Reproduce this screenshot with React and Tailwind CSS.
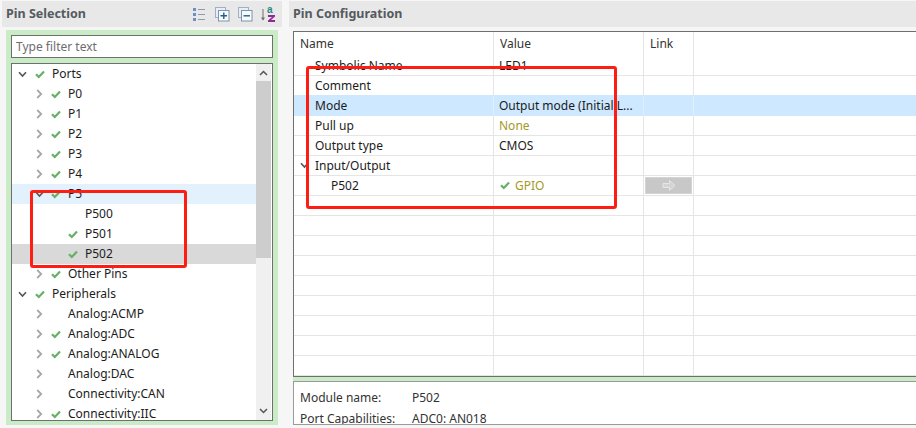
import React from 'react';

const tree = [
  { label: 'Ports', level: 0, open: true, check: true },
  { label: 'P0', level: 1, check: true },
  { label: 'P1', level: 1, check: true },
  { label: 'P2', level: 1, check: true },
  { label: 'P3', level: 1, check: true },
  { label: 'P4', level: 1, check: true },
  { label: 'P5', level: 1, open: true, check: true, hover: true },
  { label: 'P500', level: 2, leaf: true },
  { label: 'P501', level: 2, leaf: true, check: true },
  { label: 'P502', level: 2, leaf: true, check: true, selected: true },
  { label: 'Other Pins', level: 1, check: true },
  { label: 'Peripherals', level: 0, open: true, check: true },
  { label: 'Analog:ACMP', level: 1 },
  { label: 'Analog:ADC', level: 1, check: true },
  { label: 'Analog:ANALOG', level: 1, check: true },
  { label: 'Analog:DAC', level: 1 },
  { label: 'Connectivity:CAN', level: 1 },
  { label: 'Connectivity:IIC', level: 1, check: true },
];

const rows = [
  { name: 'Symbolic Name', value: 'LED1' },
  { name: 'Comment', value: '', beforeSelected: true },
  { name: 'Mode', value: 'Output mode (Initial L...', selected: true },
  { name: 'Pull up', value: 'None', valueClass: 'text-[#a39a1f]' },
  { name: 'Output type', value: 'CMOS' },
  { name: 'Input/Output', value: '', open: true },
  { name: 'P502', value: 'GPIO', child: true, check: true, valueClass: 'text-[#a39a1f]', link: true },
  ...Array.from({ length: 9 }, () => ({ name: '', value: '' })),
];

function Check({ className = '' }) {
  return (
    <svg width="10" height="9" viewBox="0 0 10 9" className={className}>
      <path d="M1 4.2 L3.8 7 L9 1.5" fill="none" stroke="#64b064" strokeWidth="2.2" />
    </svg>
  );
}

function Chevron({ open }) {
  if (open) {
    return (
      <svg width="9" height="7" viewBox="0 0 9 7">
        <path d="M1 1.2 L4.5 5 L8 1.2" fill="none" stroke="#555555" strokeWidth="1.6" />
      </svg>
    );
  }
  return (
    <svg width="7" height="10" viewBox="0 0 7 10" className="ml-[2px]">
      <path d="M1.2 1 L5.2 5 L1.2 9" fill="none" stroke="#a8a8a8" strokeWidth="1.8" />
    </svg>
  );
}

function TreeRow({ item }) {
  const bg = item.selected ? 'bg-[#d9d9d9]' : item.hover ? 'bg-[#e3f1fc]' : '';
  const indent = item.level === 0 ? 'pl-[6px]' : item.level === 1 ? 'pl-[22px]' : 'pl-[39px]';
  return (
    <div className={`h-5 shrink-0 flex items-center ${indent} ${bg}`}>
      <span className={`w-[10px] flex ${item.open && item.level === 1 ? 'justify-end' : ''}`}>
        {!item.leaf && <Chevron open={item.open} />}
      </span>
      <span className="w-[10px] ml-[7px] flex">{item.check && <Check />}</span>
      <span className="ml-[7px] text-[12px] text-[#1c1c1c] whitespace-nowrap">{item.label}</span>
    </div>
  );
}

function ToolbarIcons() {
  return (
    <div className="flex items-center gap-[7px]">
      <svg width="16" height="16" viewBox="0 0 16 16">
        <rect x="2" y="2" width="3" height="3" fill="#6f8fc4" />
        <rect x="2" y="7" width="3" height="3" fill="#6f8fc4" />
        <rect x="2" y="12" width="3" height="3" fill="#6f8fc4" />
        <path d="M7 3.5h7M7 8.5h7M7 13.5h7" stroke="#8d9bb0" strokeWidth="1" />
      </svg>
      <svg width="16" height="16" viewBox="0 0 16 16">
        <rect x="1.5" y="1.5" width="10" height="10" fill="#e8eef5" stroke="#9fb0c4" />
        <rect x="4.5" y="4.5" width="10.5" height="10.5" fill="#f8fbfd" stroke="#8093ab" />
        <path d="M6.5 9.8h6.5M9.8 6.5v6.5" stroke="#1f5f8f" strokeWidth="1.4" />
      </svg>
      <svg width="16" height="16" viewBox="0 0 16 16">
        <rect x="1.5" y="1.5" width="10" height="10" fill="#e8eef5" stroke="#9fb0c4" />
        <rect x="4.5" y="4.5" width="10.5" height="10.5" fill="#f8fbfd" stroke="#8093ab" />
        <path d="M6.5 9.8h6.5" stroke="#1f5f8f" strokeWidth="1.4" />
      </svg>
      <svg width="17" height="18" viewBox="0 0 17 18">
        <path d="M3 4v11" stroke="#707070" strokeWidth="1" />
        <path d="M1 12.5h4L3 15.5z" fill="#707070" />
        <text x="7" y="8" fontSize="10" fontWeight="700" fill="#2a8a7a" fontFamily="'Liberation Sans', sans-serif">a</text>
        <path d="M8 10h7v1.6l-4 3.4h4v2h-7v-1.6l4-3.4h-4z" fill="#8e2a96" />
      </svg>
    </div>
  );
}

function PinSelection() {
  return (
    <div className="w-[280px] ml-[2px] shrink-0 flex flex-col">
      <div className="h-[26px] mt-px bg-[#e8e8e8] flex items-center justify-between pl-[4px] pr-[5px]">
        <span className="text-[12.5px] font-bold text-[#555a60]">Pin Selection</span>
        <ToolbarIcons />
      </div>
      <div className="mt-[3px] mx-[4px] h-[395px] bg-[#c9ebc5] px-[5px] pt-[5px] pb-[4px] flex flex-col gap-[5px]">
        <div className="h-[23px] shrink-0 border border-[#6f6f6f] bg-white flex items-center px-[4px] text-[12px] text-[#6d6d6d]">
          Type filter text
        </div>
        <div className="flex-1 min-h-0 border border-[#6f6f6f] bg-white flex overflow-hidden">
          <div className="flex-1 min-w-0 flex flex-col overflow-hidden">
            {tree.map((item) => (
              <TreeRow key={item.label} item={item} />
            ))}
          </div>
          <div className="w-[15px] mr-px shrink-0 bg-[#f0f0f0] flex flex-col">
            <div className="h-[17px] flex items-center justify-center">
              <svg width="9" height="6" viewBox="0 0 9 6">
                <path d="M1 5 L4.5 1.5 L8 5" fill="none" stroke="#555555" strokeWidth="1.5" />
              </svg>
            </div>
            <div className="h-[177px] bg-[#cdcdcd]" />
            <div className="flex-1 flex items-end justify-center pb-[6px]">
              <svg width="9" height="6" viewBox="0 0 9 6">
                <path d="M1 1 L4.5 4.5 L8 1" fill="none" stroke="#555555" strokeWidth="1.5" />
              </svg>
            </div>
          </div>
        </div>
      </div>
    </div>
  );
}

function ConfigRow({ row }) {
  const bg = row.selected ? 'bg-[#cde8ff]' : '';
  const bottom = row.selected ? 'border-b-[#cde8ff]' : row.beforeSelected ? 'border-b-[#cde8ff]' : 'border-b-[#e5e5e5]';
  const right = row.selected ? 'border-r-[#e3eef8]' : 'border-r-[#e5e5e5]';
  return (
    <div className={`h-5 shrink-0 flex text-[12px] text-[#1c1c1c] ${bg}`}>
      <div className={`w-[200px] shrink-0 border-r border-b ${right} ${bottom} flex items-center overflow-hidden ${row.open ? 'pl-[6px]' : row.child ? 'pl-[37px]' : 'pl-[21px]'}`}>
        {row.open && (
          <span className="w-[15px] flex">
            <Chevron open />
          </span>
        )}
        {row.name}
      </div>
      <div className={`w-[150px] shrink-0 border-r border-b ${right} ${bottom} flex items-center pl-[5px] ${row.valueClass || ''}`}>
        {row.check && <Check className="mr-[5px] ml-[1px]" />}
        <span className="whitespace-nowrap">{row.value}</span>
      </div>
      <div className={`w-[50px] shrink-0 border-r border-b ${right} ${bottom} flex items-center pl-[1px]`}>
        {row.link && (
          <div className="w-[47px] h-[17px] bg-[#c8c8c8] border border-[#d4d4d4] flex items-center justify-center">
            <svg width="14" height="13" viewBox="0 0 14 13">
              <path d="M1 4.5h6.5V1.5l5.5 5-5.5 5V8.5H1z" fill="#d4d4d4" stroke="#e6e6e6" />
            </svg>
          </div>
        )}
      </div>
      <div className={`flex-1 border-b ${bottom}`} />
    </div>
  );
}

function PinConfiguration() {
  return (
    <div className="flex-1 min-w-0 ml-[7px] flex flex-col">
      <div className="h-[26px] mt-px bg-[#e8e8e8] flex items-center pl-[4px]">
        <span className="text-[12.5px] font-bold text-[#555a60]">Pin Configuration</span>
      </div>
      <div className="ml-[4px] mt-[4px] h-[346px] border-l border-t border-b border-[#6f6f6f] bg-white overflow-hidden flex flex-col">
        <div className="h-[24px] shrink-0 flex text-[12px] text-[#333333]">
          <div className="w-[200px] shrink-0 border-r border-[#e5e5e5] pl-[6px] flex items-center">Name</div>
          <div className="w-[150px] shrink-0 border-r border-[#e5e5e5] pl-[6px] flex items-center">Value</div>
          <div className="w-[50px] shrink-0 border-r border-[#e5e5e5] pl-[6px] flex items-center">Link</div>
        </div>
        {rows.map((row, i) => (
          <ConfigRow key={i} row={row} />
        ))}
      </div>
      <div className="h-[4px] ml-[4px] bg-[#c9ebc5]" />
      <div className="ml-[4px] h-[44px] border-l border-t border-b border-[#9a9a9a] bg-white overflow-hidden px-[6px] pt-[6px] text-[12px] text-[#333333]">
        <div className="flex h-[20px] items-center">
          <span className="w-[112px]">Module name:</span>
          <span>P502</span>
        </div>
        <div className="flex h-[20px] mt-px items-center">
          <span className="w-[112px]">Port Capabilities:</span>
          <span>ADC0: AN018</span>
        </div>
      </div>
    </div>
  );
}

export default function App() {
  return (
    <div className="relative w-[916px] h-[428px] overflow-hidden flex bg-[#f6f6f6] font-['Noto_Sans','Liberation_Sans',sans-serif]">
      <PinSelection />
      <PinConfiguration />
      <div className="absolute left-[30px] top-[190px] w-[157px] h-[78px] border-[3px] border-[#fe1d13] rounded-[3px]" />
      <div className="absolute left-[306px] top-[66px] w-[311px] h-[143px] border-[3px] border-[#fe1d13] rounded-[3px]" />
    </div>
  );
}
